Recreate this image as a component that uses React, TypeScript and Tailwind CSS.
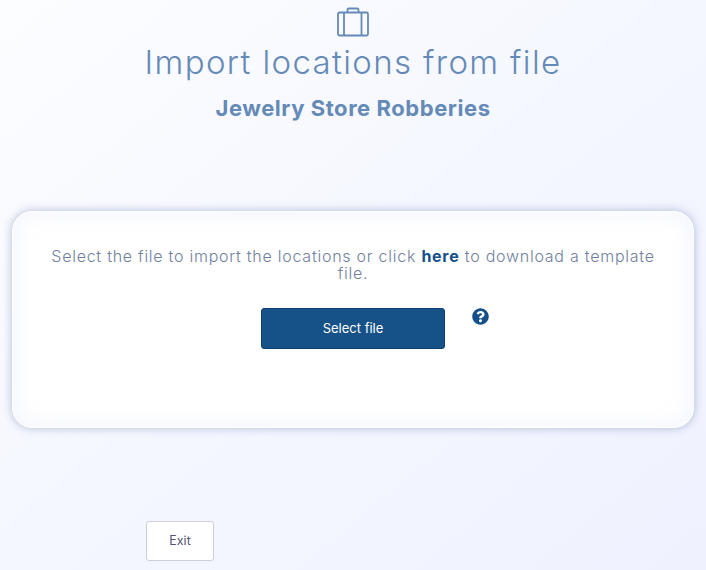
import React from 'react';
import { FaQuestionCircle } from 'react-icons/fa';

const SuitcaseIcon: React.FC = () => (
  <svg width="34" height="30" viewBox="0 0 34 30" fill="none" stroke="#658ab7" strokeWidth="1.8" className="block">
    <path d="M11.5 5.5V2.8C11.5 2.1 12.1 1.5 12.8 1.5H21.2C21.9 1.5 22.5 2.1 22.5 2.8V5.5" />
    <rect x="2" y="5.5" width="30" height="23" rx="1.5" />
    <path d="M8 5.5V28.5M25.5 5.5V28.5" />
  </svg>
);

const App: React.FC = () => {
  return (
    <div className="h-[570px] w-[706px] overflow-hidden bg-gradient-to-br from-[#fcfdff] via-[#f5f7ff] to-[#eff2fe] font-['Inter',sans-serif]">
      {/* Header */}
      <div className="flex flex-col items-center pt-[7px]">
        <SuitcaseIcon />
        <h1 className="mt-[3px] text-[33px] leading-[44px] font-light text-[#658ab7] tracking-[1.36px]">Import locations from file</h1>
        <h2 className="mt-[10px] text-[22px] leading-[28px] font-bold text-[#658ab7] tracking-[0.55px]">Jewelry Store Robberies</h2>
      </div>

      {/* Card */}
      <div className="mx-3 mt-[89px] h-[217px] rounded-[20px] border border-white bg-white px-8 pt-[36px] shadow-[0_0_10px_rgba(96,112,160,0.45),inset_0_0_24px_rgba(236,240,255,0.7)]">
        <p className="text-center text-[16px] leading-[17px] font-light text-[#6f7f9d] tracking-[0.75px]">
          Select the file to import the locations or click <a className="font-bold text-[#15508a]">here</a> to download a template file.
        </p>
        <div className="mt-[26px] grid grid-cols-[1fr_184px_1fr]">
          <div />
          <button className="h-[41px] rounded-[3px] border border-[#0f3f70] bg-[#165287] text-[13px] text-white">Select file</button>
          <div className="pl-[27px]">
            <FaQuestionCircle className="text-[17px] text-[#15508a]" />
          </div>
        </div>
      </div>

      {/* Footer */}
      <div className="mt-[93px] pl-[146px]">
        <button className="h-10 w-[68px] rounded-[3px] border border-[#cfcfd8] bg-white pt-px text-[12.5px] text-[#55566e]">Exit</button>
      </div>
    </div>
  );
};

export default App;
